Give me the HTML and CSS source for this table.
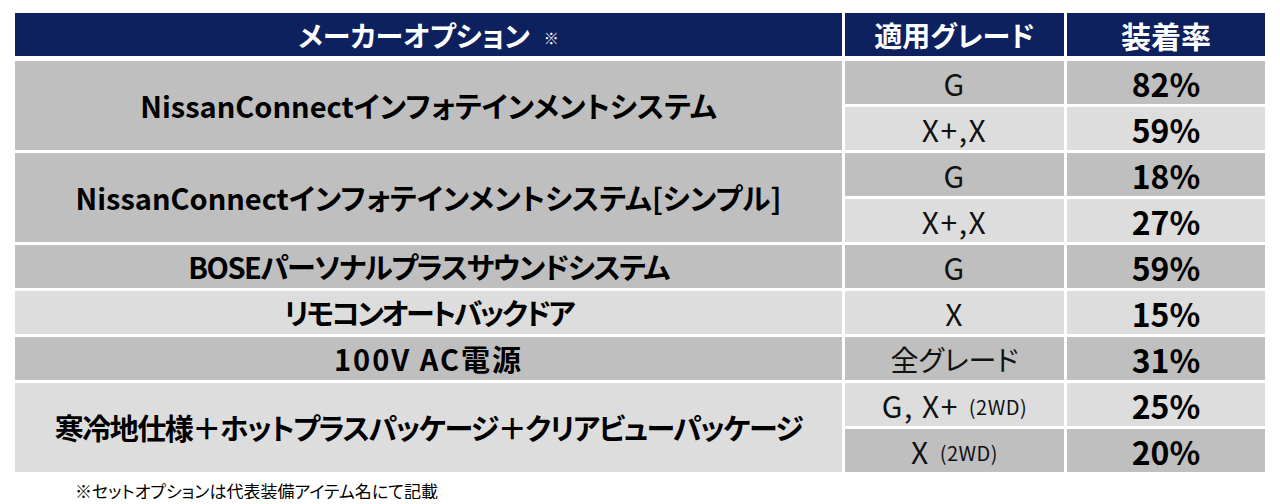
FILE: index.html
```html
<!DOCTYPE html>
<html lang="ja">
<head>
<meta charset="utf-8">
<link rel="stylesheet" href="styles.css">
</head>
<body>
<div class="page">
  <div class="table">
    <div class="head">
      <div class="hcell">メーカーオプション<span class="mark">※</span></div>
      <div class="hcell">適用グレード</div>
      <div class="hcell rate">装着率</div>
    </div>
    <div class="body">
      <div class="cell name dark span2">NissanConnectインフォテインメントシステム</div>
      <div class="cell grade latin dark">G</div>
      <div class="cell pct dark">82%</div>
      <div class="cell grade latin light">X+,X</div>
      <div class="cell pct light">59%</div>

      <div class="cell name dark span2">NissanConnectインフォテインメントシステム[シンプル]</div>
      <div class="cell grade latin dark">G</div>
      <div class="cell pct dark">18%</div>
      <div class="cell grade latin light">X+,X</div>
      <div class="cell pct light">27%</div>

      <div class="cell name tight dark">BOSEパーソナルプラスサウンドシステム</div>
      <div class="cell grade latin dark">G</div>
      <div class="cell pct dark">59%</div>

      <div class="cell name tighter light">リモコンオートバックドア</div>
      <div class="cell grade latin light">X</div>
      <div class="cell pct light">15%</div>

      <div class="cell name wide dark">100V AC電源</div>
      <div class="cell grade dark">全グレード</div>
      <div class="cell pct dark">31%</div>

      <div class="cell name tight light span2">寒冷地仕様＋ホットプラスパッケージ＋クリアビューパッケージ</div>
      <div class="cell grade latin light">G, X+ <span class="small">(2WD)</span></div>
      <div class="cell pct light">25%</div>
      <div class="cell grade latin dark">X <span class="small">(2WD)</span></div>
      <div class="cell pct dark">20%</div>
    </div>
  </div>
  <p class="note">※セットオプションは代表装備アイテム名にて記載</p>
</div>
</body>
</html>
```

FILE: styles.css
```css
html, body {
  margin: 0;
  padding: 0;
  background: #ffffff;
}

body {
  font-family: "Noto Sans CJK JP", "Noto Sans", sans-serif;
  font-feature-settings: "palt";
  color: #000;
}

.page {
  padding: 13px 0 0 15px;
  width: 1250px;
}

.table {
  display: flex;
  flex-direction: column;
  gap: 5px;
}

.head {
  display: grid;
  grid-template-columns: 827px 222px 201px;
  height: 43px;
  background: #0c215e;
}

.hcell {
  display: flex;
  align-items: center;
  justify-content: center;
  color: #fff;
  font-weight: 700;
  font-size: 28px;
  line-height: 1;
  border-left: 3px solid #fff;
}

.hcell:first-child {
  border-left: none;
}

.hcell.rate {
  font-size: 30px;
}

.mark {
  font-size: 15px;
  font-weight: 400;
  margin-left: 14px;
  margin-top: 6px;
}

.body {
  display: grid;
  grid-template-columns: 827px 219px 198px;
  grid-template-rows: repeat(9, 43px);
  column-gap: 3px;
  row-gap: 3px;
}

.cell {
  display: flex;
  align-items: center;
  justify-content: center;
  line-height: 1;
  white-space: nowrap;
}

.span2 {
  grid-row: span 2;
}

.dark {
  background: #bfbfbf;
}

.light {
  background: #dddddd;
}

.name {
  font-weight: 700;
  font-size: 29px;
}

.name.tight {
  letter-spacing: -1.5px;
}

.name.tighter {
  letter-spacing: -2.5px;
}

.name.wide {
  letter-spacing: 2px;
}

.grade {
  font-weight: 400;
  font-size: 28px;
  color: #111;
}

.grade.latin {
  font-size: 30px;
  letter-spacing: 1.5px;
}

.small {
  font-size: 20px;
  letter-spacing: 0.5px;
  margin-left: 10px;
  margin-top: 5px;
}

.pct {
  font-weight: 700;
  font-size: 32px;
}

.note {
  margin: 10px 0 0 60px;
  font-size: 17px;
  line-height: 1;
}
```
